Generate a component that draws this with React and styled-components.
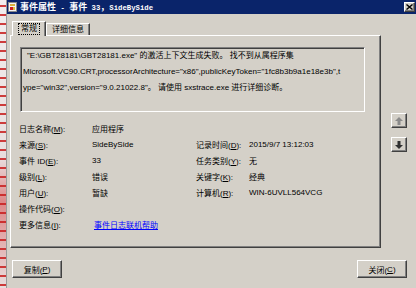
import React from 'react';
import styled, { createGlobalStyle } from 'styled-components';

const Global = createGlobalStyle`
  html, body { margin: 0; padding: 0; }
  body {
    width: 416px; height: 288px; overflow: hidden; background: #d4d0c8;
    font-family: "Liberation Sans", "Noto Sans CJK SC", sans-serif;
    font-size: 8px; color: #000;
  }
`;

const Screen = styled.div`
  display: flex; width: 416px; height: 288px;
`;

const Backdrop = styled.div`
  width: 6px; flex: none;
  background:
    repeating-linear-gradient(to bottom, transparent 0 5px, rgba(200,30,30,0.85) 5px 7px, transparent 7px 9px),
    linear-gradient(to bottom, #f2eeee 0%, #e8dede 55%, #d88 70%, #e8dede 100%);
  border-right: 1px solid #9a9a9a;
`;

const Window = styled.div`
  flex: 1; display: flex; flex-direction: column; background: #d4d0c8;
`;

const TitleBar = styled.div`
  height: 14px; background: #0a246a; display: flex; align-items: center;
  padding: 0 1px 0 1px; color: #fff; font-weight: bold;
`;

const TitleIcon = styled.svg`
  width: 9px; height: 10px; flex: none;
`;

const TitleText = styled.div`
  margin-left: 3px; font-family: "Liberation Mono", "Noto Sans CJK SC", monospace;
  font-size: 7.3px; white-space: pre; line-height: 14px;
`;

const TitleCjk = styled.span`
  font-family: "Noto Sans CJK SC", sans-serif; font-size: 9px;
`;

const CloseBtn = styled.div`
  margin-left: auto; width: 11px; height: 10px; box-sizing: border-box;
  background: #d4d0c8; border-top: 1px solid #fff; border-left: 1px solid #fff;
  border-right: 1px solid #404040; border-bottom: 1px solid #404040;
  box-shadow: inset -1px -1px #808080;
  display: flex; align-items: center; justify-content: center;
`;

const Body = styled.div`
  display: flex; flex-direction: column; padding: 7px 0 0 3px;
`;

const MainRow = styled.div`
  display: flex; align-items: flex-start;
`;

const PanelColumn = styled.div`
  display: flex; flex-direction: column; width: 371px;
`;

const TabRow = styled.div`
  display: flex; align-items: flex-end; height: 14px; padding-left: 2px;
`;

const Tab = styled.div`
  box-sizing: border-box; position: relative;
  height: ${p => (p.$active ? 15 : 12)}px;
  margin-bottom: ${p => (p.$active ? -1 : 0)}px;
  z-index: ${p => (p.$active ? 2 : 1)};
  padding: 0 ${p => (p.$active ? 6 : 5)}px;
  background: #d4d0c8;
  border-top: 1px solid #fff; border-left: 1px solid #fff;
  border-right: 1px solid #404040;
  box-shadow: inset -1px 0 #808080;
  font-size: 8px; line-height: ${p => (p.$active ? 13 : 11)}px;
  display: flex; align-items: center;
`;

const Focus = styled.span`
  outline: 1px dotted #000; outline-offset: 0; padding: 0 2px; line-height: 10px;
`;

const Panel = styled.div`
  box-sizing: border-box; width: 371px; height: 213px;
  border-top: 1px solid #fff; border-left: 1px solid #fff;
  border-right: 1px solid #404040; border-bottom: 1px solid #404040;
  box-shadow: inset -1px -1px #808080;
  padding: 11px 0 0 9px; display: flex; flex-direction: column;
`;

const MessageBox = styled.div`
  box-sizing: border-box; width: 345px; height: 65px;
  border-top: 1px solid #808080; border-left: 1px solid #808080;
  border-right: 1px solid #fff; border-bottom: 1px solid #fff;
  box-shadow: inset 1px 1px #404040;
  padding: 0 2px; line-height: 16px;
`;

const MsgLine = styled.div`
  white-space: nowrap; padding-left: ${p => p.$indent || 0}px;
`;

const Fields = styled.div`
  margin-top: 8px; margin-left: -1px;
  display: grid; grid-template-columns: 73px 104px 53px 1fr;
  grid-auto-rows: 16px; align-items: center; white-space: nowrap;
`;

const Cell = styled.div`
  grid-column: ${p => p.$span || 'auto'};
`;

const Link = styled.a`
  color: #0000ff; text-decoration: underline; margin-left: 2px; cursor: pointer;
`;

const SideButtons = styled.div`
  display: flex; flex-direction: column; gap: 9px; margin: 92px 0 0 10px;
`;

const ArrowBtn = styled.div`
  box-sizing: border-box; width: 16px; height: 15px; background: #d4d0c8;
  border-top: 1px solid #fff; border-left: 1px solid #fff;
  border-right: 1px solid #404040; border-bottom: 1px solid #404040;
  box-shadow: inset -1px -1px #808080;
  display: flex; align-items: center; justify-content: center;
`;

const ButtonRow = styled.div`
  display: flex; justify-content: space-between; margin-top: 12px; padding: 0 9px 0 2px;
`;

const Button = styled.div`
  box-sizing: border-box; width: 50px; height: 18px; background: #d4d0c8;
  border-top: 1px solid #fff; border-left: 1px solid #fff;
  border-right: 1px solid #404040; border-bottom: 1px solid #404040;
  box-shadow: inset -1px -1px #808080;
  display: flex; align-items: center; justify-content: center; font-size: 8px;
`;

const Arrow = ({ up, color }) => (
  <svg width="8" height="8" viewBox="0 0 8 8">
    <g transform={up ? '' : 'rotate(180 4 4)'}>
      <polygon points="4,0 8,4 5.5,4 5.5,8 2.5,8 2.5,4 0,4" fill={color} />
    </g>
  </svg>
);

const rows = [
  ['日志名称', 'M', '应用程序', null, null, null],
  ['来源', 'S', 'SideBySide', '记录时间', 'D', '2015/9/7 13:12:03'],
  ['事件 ID', 'E', '33', '任务类别', 'Y', '无'],
  ['级别', 'L', '错误', '关键字', 'K', '经典'],
  ['用户', 'U', '暂缺', '计算机', 'R', 'WIN-6UVLL564VCG'],
  ['操作代码', 'O', '', null, null, null],
];

const Label = ({ text, k }) => (
  <>
    {text}(<u>{k}</u>):
  </>
);

export default function App() {
  return (
    <>
      <Global />
      <Screen>
        <Backdrop />
        <Window>
          <TitleBar>
            <TitleIcon viewBox="0 0 9 10">
              <rect x="0.5" y="0.5" width="8" height="9" fill="#f4f4f4" stroke="#8a8a8a" />
              <rect x="2" y="2" width="5" height="2" fill="#d9b23a" />
              <rect x="2" y="5" width="3" height="3" fill="#d02020" />
              <rect x="5" y="5" width="2" height="3" fill="#e0c040" />
            </TitleIcon>
            <TitleText>
              <TitleCjk>事件属性</TitleCjk>{' - '}<TitleCjk>事件</TitleCjk>{' 33'}<TitleCjk>，</TitleCjk>SideBySide
            </TitleText>
            <CloseBtn>
              <svg width="7" height="6" viewBox="0 0 7 6">
                <path d="M0.5 0.5 L6.5 5.5 M6.5 0.5 L0.5 5.5" stroke="#000" strokeWidth="1.4" />
              </svg>
            </CloseBtn>
          </TitleBar>
          <Body>
            <MainRow>
              <PanelColumn>
                <TabRow>
                  <Tab $active><Focus>常规</Focus></Tab>
                  <Tab>详细信息</Tab>
                </TabRow>
                <Panel>
                  <MessageBox>
                    <MsgLine $indent={4}>"E:\GBT28181\GBT28181.exe" 的激活上下文生成失败。 找不到从属程序集</MsgLine>
                    <MsgLine>Microsoft.VC90.CRT,processorArchitecture="x86",publicKeyToken="1fc8b3b9a1e18e3b",t</MsgLine>
                    <MsgLine>ype="win32",version="9.0.21022.8"。 请使用 sxstrace.exe 进行详细诊断。</MsgLine>
                  </MessageBox>
                  <Fields>
                    {rows.map((r, i) => (
                      <React.Fragment key={i}>
                        <Cell><Label text={r[0]} k={r[1]} /></Cell>
                        <Cell>{r[2]}</Cell>
                        <Cell>{r[3] ? <Label text={r[3]} k={r[4]} /> : null}</Cell>
                        <Cell>{r[5]}</Cell>
                      </React.Fragment>
                    ))}
                    <Cell><Label text="更多信息" k="I" /></Cell>
                    <Cell $span="2 / 5"><Link>事件日志联机帮助</Link></Cell>
                  </Fields>
                </Panel>
              </PanelColumn>
              <SideButtons>
                <ArrowBtn><Arrow up color="#8a8a8a" /></ArrowBtn>
                <ArrowBtn><Arrow color="#303030" /></ArrowBtn>
              </SideButtons>
            </MainRow>
            <ButtonRow>
              <Button>复制(<u>P</u>)</Button>
              <Button>关闭(<u>C</u>)</Button>
            </ButtonRow>
          </Body>
        </Window>
      </Screen>
    </>
  );
}
